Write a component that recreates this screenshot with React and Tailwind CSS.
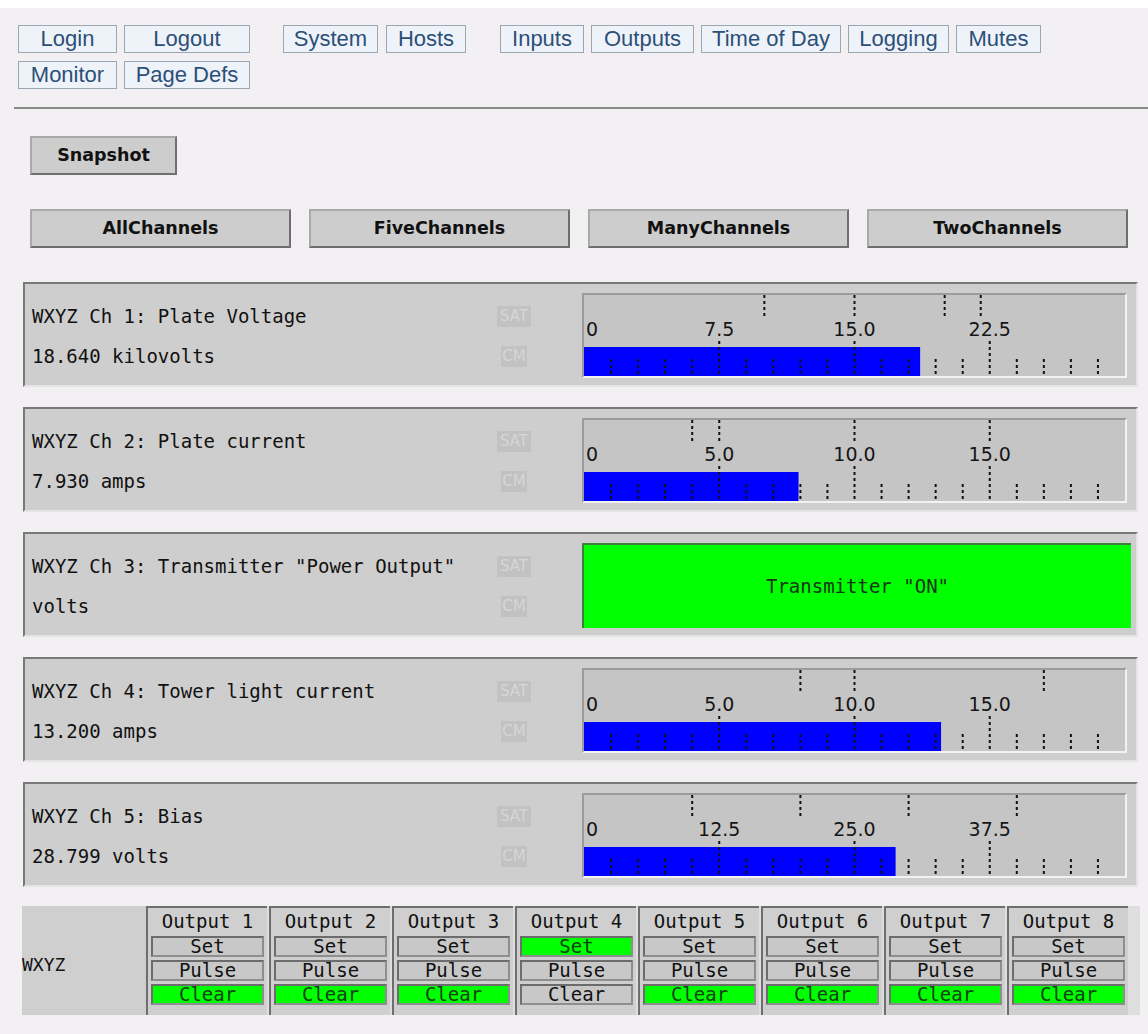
import React from "react";

const MONO = "font-['DejaVu_Sans_Mono',monospace]";

const navGroups = [
  [
    { label: "System", w: "w-[95px]" },
    { label: "Hosts", w: "w-[80px]" },
  ],
  [
    { label: "Inputs", w: "w-[84px]" },
    { label: "Outputs", w: "w-[103px]" },
    { label: "Time of Day", w: "w-[140px]" },
    { label: "Logging", w: "w-[101px]" },
    { label: "Mutes", w: "w-[85px]" },
  ],
];

const channels = [
  {
    title: "WXYZ Ch 1: Plate Voltage",
    reading: "18.640 kilovolts",
    max: 30,
    value: 18.64,
    limits: [10, 15, 20, 22],
  },
  {
    title: "WXYZ Ch 2: Plate current",
    reading: "7.930 amps",
    max: 20,
    value: 7.93,
    limits: [4, 5, 10, 15],
  },
  {
    title: 'WXYZ Ch 3: Transmitter "Power Output"',
    reading: "volts",
    status: 'Transmitter "ON"',
  },
  {
    title: "WXYZ Ch 4: Tower light current",
    reading: "13.200 amps",
    max: 20,
    value: 13.2,
    limits: [8, 10, 17],
  },
  {
    title: "WXYZ Ch 5: Bias",
    reading: "28.799 volts",
    max: 50,
    value: 28.799,
    limits: [10, 20, 30, 40],
  },
];

const outputs = [1, 2, 3, 4, 5, 6, 7, 8].map((n) => ({
  n,
  set: n === 4,
  clear: n !== 4,
}));

function NavBtn({ label, w }) {
  return (
    <div
      className={`${w} h-[28px] border border-[#9ca6b1] bg-[#eef3f9] text-center font-['Liberation_Sans',Arial,sans-serif] text-[22px] leading-[26px] text-[#2c4f78]`}
    >
      {label}
    </div>
  );
}

function GrayBtn({ label, w }) {
  return (
    <div
      className={`${w} flex h-[39px] items-center justify-center border-2 border-t-[#a9a9a9] border-l-[#a9a9a9] border-b-[#6e6e6e] border-r-[#6e6e6e] bg-[#cdcdcd] font-['DejaVu_Sans',sans-serif] text-[17.5px] font-bold text-[#111]`}
    >
      {label}
    </div>
  );
}

function Meter({ max, value, limits }) {
  const W = 541;
  const sx = (v) => (v / max) * W;
  const ticks = Array.from({ length: 19 }, (_, i) => i + 1);
  const majors = [5, 10, 15];
  return (
    <div className="mt-[9px] h-[85px] w-[545px] border-2 border-t-[#9b9b9b] border-l-[#9b9b9b] border-b-[#f2f2f2] border-r-[#f2f2f2] bg-[#c5c5c5]">
      <svg width={W} height="81" className="block">
        {limits.map((l) => (
          <line
            key={`l${l}`}
            x1={sx(l)}
            x2={sx(l)}
            y1={0}
            y2={22}
            stroke="#111"
            strokeWidth="2"
            strokeDasharray="3 3"
          />
        ))}
        <text x="2" y="41" fontFamily="DejaVu Sans" fontSize="19" fill="#151515">
          0
        </text>
        {majors.map((m) => {
          const v = (m * max) / 20;
          return (
            <text
              key={`t${m}`}
              x={sx(v)}
              y="41"
              textAnchor="middle"
              fontFamily="DejaVu Sans"
              fontSize="19"
              fill="#151515"
            >
              {v.toFixed(1)}
            </text>
          );
        })}
        <rect x="0" y="52" width={sx(value)} height="29" fill="#0000ff" />
        {ticks.map((i) => {
          const x = (i / 20) * W;
          return (
            <line
              key={`k${i}`}
              x1={x}
              x2={x}
              y1={i % 5 === 0 ? 46 : 64}
              y2={81}
              stroke="#111"
              strokeWidth="2"
              strokeDasharray="3 3"
            />
          );
        })}
      </svg>
    </div>
  );
}

function Status({ text }) {
  return (
    <div
      className={`mt-[9px] flex h-[85px] w-[549px] items-center justify-center border-t-2 border-l-2 border-[#3f7f3f] bg-[#00ff00] ${MONO} text-[19px] text-[#153515]`}
    >
      {text}
    </div>
  );
}

function Badge({ label, w }) {
  return (
    <div
      className={`${w} flex h-[21px] items-center justify-center bg-[#c2c2c2] font-['DejaVu_Sans',sans-serif] text-[15px] text-[#d6d6d6]`}
    >
      {label}
    </div>
  );
}

function Panel({ ch }) {
  return (
    <div className="ml-[23px] flex h-[105px] w-[1115px] border-2 border-t-[#787878] border-l-[#787878] border-r-[#e4e4e4] border-b-[#e4e4e4] bg-[#cecece]">
      <div className={`flex w-[557px] flex-col pt-[12px] pr-[50px] ${MONO} text-[19px] text-[#111]`}>
        <div className="flex h-[40px] items-center">
          <div className="flex-1 pl-[7px] whitespace-pre">{ch.title}</div>
          <div className="flex w-[36px] justify-center">
            <Badge label="SAT" w="w-[34px]" />
          </div>
        </div>
        <div className="flex h-[40px] items-center">
          <div className="flex-1 pl-[7px] whitespace-pre">{ch.reading}</div>
          <div className="flex w-[36px] justify-center">
            <Badge label="CM" w="w-[26px]" />
          </div>
        </div>
      </div>
      {ch.status ? (
        <Status text={ch.status} />
      ) : (
        <Meter max={ch.max} value={ch.value} limits={ch.limits} />
      )}
    </div>
  );
}

function OutBtn({ label, on }) {
  return (
    <div
      className={`flex h-[21px] items-center justify-center border-2 border-t-[#6c6c6c] border-l-[#6c6c6c] border-b-[#8e8e8e] border-r-[#8e8e8e] ${
        on ? "bg-[#00ff00] text-[#124012]" : "bg-[#c8c8c8] text-[#111]"
      } text-[19px] leading-[17px]`}
    >
      {label}
    </div>
  );
}

function OutputCol({ o }) {
  return (
    <div className="w-[123px]">
      <div className={`h-full w-[121px] border-t-2 border-l-2 border-[#6e6e6e] bg-[#cfcfcf] ${MONO}`}>
        <div className="flex h-[27px] items-center justify-center text-[19px] text-[#111]">
          Output {o.n}
        </div>
        <div className="mt-[1px] flex flex-col gap-[3px] px-[3px]">
          <OutBtn label="Set" on={o.set} />
          <OutBtn label="Pulse" on={false} />
          <OutBtn label="Clear" on={o.clear} />
        </div>
      </div>
    </div>
  );
}

export default function App() {
  return (
    <div className="min-h-[1034px] w-full bg-[#f3f0f3] pb-[18px]">
      <div className="h-[8px] bg-white" />

      {/* navigation links */}
      <div className="flex items-start pt-[17px] pl-[18px]">
        <div className="grid grid-cols-[99px_126px] gap-x-[7px] gap-y-[8px]">
          <NavBtn label="Login" w="w-[99px]" />
          <NavBtn label="Logout" w="w-[126px]" />
          <NavBtn label="Monitor" w="w-[99px]" />
          <NavBtn label="Page Defs" w="w-[126px]" />
        </div>
        <div className="ml-[33px] flex gap-[8px]">
          {navGroups[0].map((b) => (
            <NavBtn key={b.label} {...b} />
          ))}
        </div>
        <div className="ml-[34px] flex gap-[7px]">
          {navGroups[1].map((b) => (
            <NavBtn key={b.label} {...b} />
          ))}
        </div>
      </div>

      <div className="mt-[18px] ml-[14px] h-[2px] bg-[#8a8a8a]" />

      {/* view selection */}
      <div className="mt-[27px] ml-[30px]">
        <GrayBtn label="Snapshot" w="w-[147px]" />
      </div>
      <div className="mt-[34px] ml-[30px] flex gap-[18px]">
        <GrayBtn label="AllChannels" w="w-[261px]" />
        <GrayBtn label="FiveChannels" w="w-[261px]" />
        <GrayBtn label="ManyChannels" w="w-[261px]" />
        <GrayBtn label="TwoChannels" w="w-[261px]" />
      </div>

      {/* channel meters */}
      <div className="mt-[34px] flex flex-col gap-[20px]">
        {channels.map((ch) => (
          <Panel key={ch.title} ch={ch} />
        ))}
      </div>

      {/* relay outputs */}
      <div className="mt-[19px] ml-[22px] flex h-[109px] w-[1118px] bg-[#dedede]">
        <div className={`flex w-[124px] items-center bg-[#cfcfcf] pt-[8px] ${MONO} text-[18px] text-[#111]`}>
          WXYZ
        </div>
        {outputs.map((o) => (
          <OutputCol key={o.n} o={o} />
        ))}
      </div>
    </div>
  );
}
